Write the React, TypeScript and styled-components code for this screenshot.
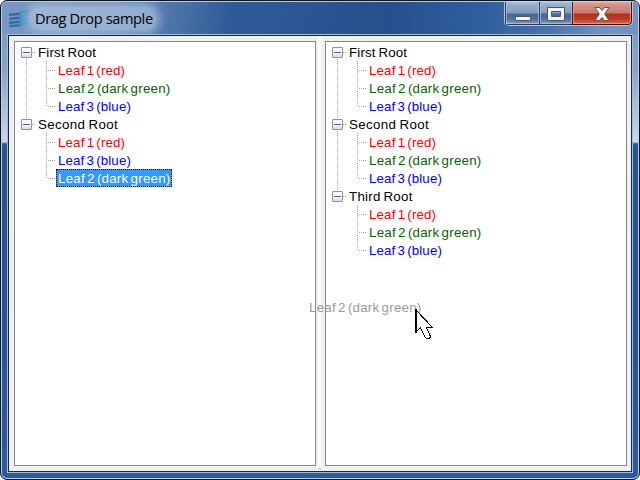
import React from "react";
import styled, { createGlobalStyle } from "styled-components";

const Global = createGlobalStyle`
  html, body { margin: 0; background: #fff; overflow: hidden; }
  * { box-sizing: border-box; }
`;

const Window = styled.div`
  width: 640px;
  height: 480px;
  padding: 1px;
  border: 1px solid #0b1322;
  border-radius: 7px;
  overflow: hidden;
  position: relative;
  display: flex;
  flex-direction: column;
  background:
    linear-gradient(180deg, #7592bc 0, #8aa4c8 70px, #c9d6e6 139px, #d4deea 141px, #577dab 142px, #28548f 144px, #285290 300px, #2c5b9b 100%);
  box-shadow: inset 0 0 0 1px #b9d0e8;
`;

const TitleBar = styled.header`
  height: 33px;
  flex: none;
  display: flex;
  align-items: flex-start;
  margin: 0;
  padding: 0 5px 0 6px;
  border-radius: 5px 5px 0 0;
  background:
    linear-gradient(97deg, #7b98c3 0, #6c8dbb 18%, #4d74a9 27%, #2f5b98 36%, #25508c 60%, #315f9e 76%, #4a73aa 86%, #7191bd 94%, #7693bd 100%);
`;

const AppIcon = styled.svg`
  width: 22px;
  height: 20px;
  margin-top: 6px;
  flex: none;
`;

const Title = styled.h1`
  margin: 5px 0 0 0;
  padding: 0 5px;
  height: 23px;
  width: 126px;
  white-space: nowrap;
  color: #000;
  font: 400 14.6px/23px "Open Sans", "Noto Sans", sans-serif;
  letter-spacing: -0.38px;
  background: rgba(190, 208, 230, 0.55);
  border-radius: 10px;
  box-shadow: 0 0 9px 4px rgba(190, 208, 230, 0.55);
`;

const Captions = styled.div`
  margin-left: auto;
  display: flex;
  height: 24px;
  width: 129px;
  border: 1px solid #b1c6df;
  border-top: 0;
  border-radius: 0 0 5px 5px;
  overflow: hidden;
`;

const Caption = styled.button<{ $w: number; $close?: boolean }>`
  width: ${(p) => p.$w}px;
  height: 23px;
  flex: none;
  padding: 1px 0 0;
  border: 1px solid ${(p) => (p.$close ? "#4c0b12" : "#233d62")};
  border-top: 0;
  margin-right: ${(p) => (p.$close ? 0 : -1)}px;
  border-radius: ${(p) => (p.$close ? "0 0 4px 0" : "0")};
  box-shadow: inset 0 0 0 1px ${(p) => (p.$close ? "rgba(244,178,163,.65)" : "rgba(185,207,230,.65)")};
  background: ${(p) =>
    p.$close
      ? "linear-gradient(#d6a096 0, #c9786b 11px, #b52f20 12px, #b93b25 17px, #d66b45 100%)"
      : "linear-gradient(#a3b7d0 0, #8299ba 11px, #48688f 12px, #536f99 17px, #839fc5 100%)"};
  display: flex;
  align-items: center;
  justify-content: center;
  svg { display: block; flex: none; }
`;

const Client = styled.main`
  flex: 1;
  margin: 0 6px 6px;
  border: 1px solid #142947;
  outline: 1px solid #a3bddb;
  background: #f0f0f0;
  padding: 5px 4px 4px 5px;
  display: flex;
  min-height: 0;
`;

const Pane = styled.section`
  width: 302px;
  height: 425px;
  flex: none;
  border: 1px solid #828790;
  background: #fff;
  padding: 1px 0 0 2px;
`;

const Splitter = styled.div`
  width: 9px;
  flex: none;
  display: flex;
  padding-left: 2px;
  margin: -5px 0 -2px;
  &::before {
    content: "";
    width: 3px;
    background: #fdfdfd;
    border-bottom: 1px solid #c4c4c4;
  }
`;

const Row = styled.div`
  height: 18px;
  display: flex;
`;

const dotsV = "repeating-linear-gradient(180deg, #a0a0a0 0 1px, transparent 1px 2px)";
const dotsH = "repeating-linear-gradient(90deg, #a0a0a0 0 1px, transparent 1px 2px)";

const Trunk = styled.div<{ $up?: boolean; $down?: boolean }>`
  width: 21px;
  height: 18px;
  flex: none;
  padding: 4px 0 0 4px;
  background-image: ${dotsV}, ${dotsV};
  background-repeat: no-repeat;
  background-position: 9px 0, 9px 10px;
  background-size: 1px ${(p) => (p.$up ? 10 : 0)}px, 1px ${(p) => (p.$down ? 8 : 0)}px;
`;

const RootTrunk = styled(Trunk)`
  width: 19px;
  background-image: ${dotsV}, ${dotsV}, ${dotsH};
  background-position: 9px 0, 9px 10px, 15px 9px;
  background-size: 1px ${(p) => (p.$up ? 10 : 0)}px, 1px ${(p) => (p.$down ? 8 : 0)}px, 3px 1px;
`;

const LeafTrunk = styled(Trunk)`
  width: 18px;
  background-image: ${dotsV}, ${dotsV}, ${dotsH};
  background-position: 8px 0, 8px 10px, 10px 9px;
  background-size: 1px ${(p) => (p.$up ? 10 : 0)}px, 1px ${(p) => (p.$down ? 8 : 0)}px, 8px 1px;
`;

const Toggle = styled.div`
  width: 11px;
  height: 11px;
  border: 1px solid #919191;
  border-radius: 1px;
  background: linear-gradient(#4664ae, #4664ae) 1px 4px / 7px 1px no-repeat,
    linear-gradient(#fff 40%, #dcdcdc);
`;

const Label = styled.span<{ $color: string; $track: number; $word?: number; $selected?: boolean }>`
  height: 18px;
  padding: 0 2px;
  white-space: nowrap;
  font: 400 13.33px/20px "Liberation Sans", Arial, sans-serif;
  letter-spacing: ${(p) => p.$track}px;
  word-spacing: ${(p) => p.$word ?? -1.7}px;
  color: ${(p) => (p.$selected ? "#fff" : p.$color)};
  background: ${(p) => (p.$selected ? "#3399ff" : "transparent")};
  outline: ${(p) => (p.$selected ? "1px dotted #170a00" : "none")};
  outline-offset: -1px;
`;

const DragGhost = styled(Label)`
  position: absolute;
  left: 306px;
  top: 297px;
`;

const Cursor = styled.svg`
  position: absolute;
  left: 413px;
  top: 307px;
`;

const LEAF = {
  1: { text: "Leaf 1 (red)", color: "#ff0000", track: 0.14 },
  2: { text: "Leaf 2 (dark green)", color: "#006400", track: 0.22 },
  3: { text: "Leaf 3 (blue)", color: "#0000ff", track: 0.12 },
} as const;

type Root = { name: string; track: number; leaves: (1 | 2 | 3)[]; selected?: number };

const leftTree: Root[] = [
  { name: "First Root", track: 0.14, leaves: [1, 2, 3] },
  { name: "Second Root", track: 0.36, leaves: [1, 3, 2], selected: 2 },
];
const rightTree: Root[] = [
  { name: "First Root", track: 0.14, leaves: [1, 2, 3] },
  { name: "Second Root", track: 0.36, leaves: [1, 2, 3] },
  { name: "Third Root", track: 0.24, leaves: [1, 2, 3] },
];

function Tree({ roots }: { roots: Root[] }) {
  return (
    <Pane>
      {roots.map((root, r) => {
        const more = r < roots.length - 1;
        return (
          <React.Fragment key={root.name}>
            <Row>
              <RootTrunk $up={r > 0} $down={more}>
                <Toggle />
              </RootTrunk>
              <Label $color="#000" $track={root.track} $word={-1}>
                {root.name}
              </Label>
            </Row>
            {root.leaves.map((leaf, i) => (
              <Row key={leaf}>
                <Trunk $up={more} $down={more} />
                <LeafTrunk $up $down={i < root.leaves.length - 1} />
                <Label $color={LEAF[leaf].color} $track={LEAF[leaf].track} $selected={root.selected === i}>
                  {LEAF[leaf].text}
                </Label>
              </Row>
            ))}
          </React.Fragment>
        );
      })}
    </Pane>
  );
}

export default function App() {
  return (
    <>
      <Global />
      <Window>
        <TitleBar>
          <AppIcon viewBox="0 0 22 20">
            <path
              d="M1 5.5l12-1v2.4l-12 1zM1.500 9.500l12-1v2.400l-12 1zM1 13.500l12-1v2.400l-12 1zM1.500 17l12-1v2.200l-12 1z"
              fill="#2a6fa3"
            />
            <path
              d="M12 3.500l9-2v2.600l-9 2.600zM12 7.500l8-2v2.600l-8 2.600zM12 11.500l9-2v2.600l-9 2.600zM12 15.500l8-2v2.400l-8 2.400z"
              fill="#3f93c4"
            />
          </AppIcon>
          <Title>Drag Drop sample</Title>
          <Captions>
            <Caption $w={35} aria-label="Minimize">
              <svg width="18" height="18" viewBox="0 0 18 18">
                <rect x="1.5" y="11.5" width="15" height="4" rx=".5" fill="#f5f5f5" stroke="#4b5768" />
              </svg>
            </Caption>
            <Caption $w={34} aria-label="Maximize">
              <svg width="18" height="14" viewBox="0 0 18 14">
                <path d="M.5.5h17v13H.5zM4.5 4.5v5h9v-5z" fill="#f3f3f3" fillRule="evenodd" stroke="#4b5768" />
              </svg>
            </Caption>
            <Caption $w={60} $close aria-label="Close">
              <svg width="16" height="14" viewBox="0 0 16 14">
                <path d="M1 .5h4.500L8 3.500l2.500-3H15L10.700 7l4.300 6.500h-4.500L8 10.500l-2.500 3H1L5.300 7z" fill="#f5f5f5" stroke="#565665" />
              </svg>
            </Caption>
          </Captions>
        </TitleBar>
        <Client>
          <Tree roots={leftTree} />
          <Splitter />
          <Tree roots={rightTree} />
        </Client>
        <DragGhost $color="#999" $track={0.22}>Leaf 2 (dark green)</DragGhost>
        <Cursor width="20" height="33" viewBox="0 0 20 33">
          <path d="M1.500 1.500v23l5-5 4 9 2 2h3l1-2-4-9h6z" fill="#fff" stroke="#000" shapeRendering="crispEdges" />
          <path d="M2 1v24" stroke="#000" strokeWidth="2" shapeRendering="crispEdges" />
        </Cursor>
      </Window>
    </>
  );
}
